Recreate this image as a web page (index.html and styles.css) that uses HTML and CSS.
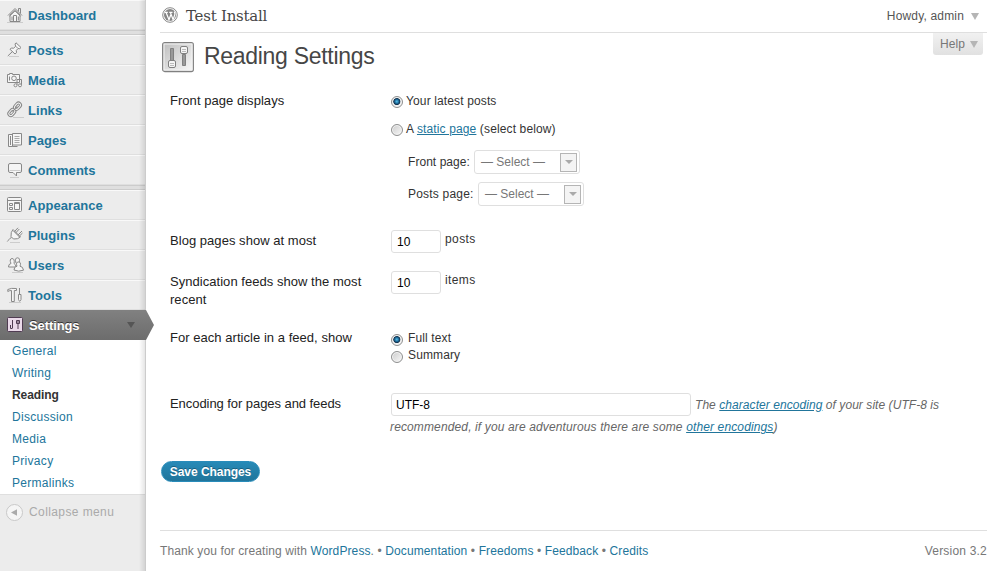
FILE: index.html
```html
<!DOCTYPE html>
<html lang="en">
<head>
<meta charset="utf-8">
<title>Reading Settings</title>
<link rel="stylesheet" href="styles.css">
</head>
<body>
<div class="layout">
  <nav class="sidebar">
    <a class="item"><svg class="icon" viewBox="0 0 16 16"><path class="fill" d="M3 8v6.500h10V8L8 3.500z"/><path d="M1 8.500L8 1.500l7 7M2.500 9.200L8 3.800l5.500 5.400M11.500 4.500v-3h2v5"/><path d="M6.500 14V8.500h3V14M5 9.500v4M11.300 9.500v4"/><path class="base" d="M0 15.500h16"/></svg><span>Dashboard</span></a>
    <div class="separator"></div>
    <a class="item"><svg class="icon" viewBox="0 0 16 16"><path class="fill" d="M9 .8l5 4.700-1.200 1.200-1.800-.2-1.700 2 .2 2.200-1.500 1.300L3 7.300l1.300-1.300 2.300.2L8.700 4.300 8 2z"/><path d="M5.500 9.500L.8 14M8.800 4.300l2 2"/><path class="base" d="M2 14.500h10"/></svg><span>Posts</span></a>
    <a class="item"><svg class="icon" viewBox="0 0 16 16"><path class="fill" d="M.5 2.500h2v-1h3v1h7v8H.5z"/><circle cx="7" cy="6.300" r="2.300"/><path d="M2.500 4.500v4M10 13V7.500h4.500V13"/><circle class="fill" cx="8.500" cy="13.300" r="1.500"/><circle class="fill" cx="13" cy="13.300" r="1.500"/></svg><span>Media</span></a>
    <a class="item"><svg class="icon links" viewBox="0 0 16 16"><g transform="rotate(-48 7.500 7.500)"><rect class="fill" x="-1" y="4.500" width="9" height="6" rx="3"/><rect x="1" y="6.500" width="5" height="2" rx="1"/><rect class="fill" x="7.500" y="4.500" width="9" height="6" rx="3"/><rect x="9.500" y="6.500" width="5" height="2" rx="1"/><path d="M4.500 7.500h7"/></g><path class="base" d="M6 15.500h11"/></svg><span>Links</span></a>
    <a class="item"><svg class="icon" viewBox="0 0 16 16"><path class="fill" d="M1.500 2.500h4v12h-4zM3.500 4v9M5.500 13v1.500h5"/><path class="fill" d="M5.500 1.500h9v11.500h-9z"/><path class="thin" d="M7.500 4.500h5M7.500 6.500h5M7.500 8.500h5M7.500 10.500h5"/></svg><span>Pages</span></a>
    <a class="item"><svg class="icon" viewBox="0 0 16 16"><path class="fill" d="M3 1.500h10q1.500 0 1.500 1.500v6q0 1.500-1.500 1.500H9.500v3.500l-3.500-3.500H3Q1.500 10.500 1.500 9V3Q1.500 1.500 3 1.500z"/><path class="base" d="M3 15.500h9M2.500 8.500h11"/></svg><span>Comments</span></a>
    <div class="separator"></div>
    <a class="item"><svg class="icon" viewBox="0 0 16 16"><rect class="fill" x=".5" y=".5" width="14" height="14" rx="1"/><path d="M1 3.500h13M2.500 6.500h3v2h-3zM2.500 10.500h3v2h-3zM7.500 5.500h5v7h-5zM7.500 6.500h5"/></svg><span>Appearance</span></a>
    <a class="item"><svg class="icon" viewBox="0 0 16 16"><path class="fill" d="M6 2.500l7.500 7.500-3 1.700-4 .3-2.500-2.500.3-4z"/><path d="M7.500 4.500L11 .8M8.800 5.800L12.300 2M11 8L15 4M12.300 9.200L15.500 6M6.500 4l6 6M4.500 10.500C2 11.500 2 13 .3 14.500"/><path class="base" d="M3 15.500h10"/></svg><span>Plugins</span></a>
    <a class="item icon-right"><svg class="icon" viewBox="0 0 16 16"><path class="fill" d="M.5 10q-.2-3 2.500-3.500Q1 2 4 1.500q3 .2 2 5 2 1 2 3.500z"/><path class="fill" d="M8 6Q6.500.8 9.500.8T11 6"/><path class="fill" d="M6 13q0-3.500 3-3.800Q7.500 5 10.500 5t1.500 4.200q3 .3 3.500 4-5 2-9.500-.2z"/><path class="base" d="M4 15.500h11"/></svg><span>Users</span></a>
    <a class="item"><svg class="icon" viewBox="0 0 16 16"><path class="fill" d="M.8 4.500V2.500Q4 .8 9.500 1.500v2H7.300v11H4.500v-11Q2 3.500.8 4.500z"/><path class="fill" d="M12.500 1v6M11.500 7.500h2.500v5q-1.200 3.500-2.500 0z"/><path class="base" d="M2 15.500h12"/></svg><span>Tools</span></a>
    <a class="item current"><svg class="icon" viewBox="0 0 16 16"><rect class="panel" x=".5" y=".5" width="15" height="14" rx="1"/><path class="knob" d="M5.500 3v8M11 4v8M3.500 8v3.500h2M9.500 3.500h3v3h-3z"/></svg><span>Settings</span><i class="arrow"></i></a>
    <div class="submenu">
      <a>General</a><a>Writing</a><a class="active">Reading</a><a>Discussion</a><a>Media</a><a>Privacy</a><a>Permalinks</a>
    </div>
    <div class="collapse"><svg class="collapse-icon" viewBox="0 0 17 17"><circle cx="8.500" cy="8.500" r="8"/><path d="M11 5.300v6.400L5 8.500z"/></svg><span>Collapse menu</span></div>
  </nav>
  <main class="content">
    <header class="topbar">
      <svg class="logo" viewBox="0 0 16 16"><circle class="ring" cx="8" cy="8" r="7.300"/><circle class="disc" cx="8" cy="8" r="6"/><path d="M2.800 5.300h3M4 5.300l3 7.500 1.800-5M7.300 5.300h3.200M8.300 5.300l2.800 7.500 1.700-5.200q.5-1.500-.7-3"/></svg>
      <h1>Test Install</h1>
      <div class="user">Howdy, admin<i class="arrow"></i></div>
    </header>
    <div class="heading">
      <svg class="page-icon" viewBox="0 0 32 31"><defs><linearGradient id="plate" x1="0" y1="0" x2="1" y2="1"><stop offset="0" stop-color="#bdbdbd"/><stop offset="1" stop-color="#fafafa"/></linearGradient></defs><rect x=".7" y=".7" width="30.600" height="28.800" rx="2" fill="url(#plate)" stroke="#808080" stroke-width="1.300"/><rect x="2" y="2" width="28" height="26" fill="none" stroke="#f3f3f3"/><path d="M8.500 6.500h3v12h-3zM20.500 12.500h3v11h-3z" fill="#999" stroke="#808080"/><rect x="6.500" y="18.500" width="7" height="7" rx="1.500" fill="#f5f5f5" stroke="#808080"/><rect x="18.500" y="4.500" width="7" height="7" rx="1.500" fill="#f5f5f5" stroke="#808080"/><path d="M8 21.500h4M8 23.500h4M20 7.500h4M20 9.500h4" stroke="#bbb"/></svg>
      <h2>Reading Settings</h2>
      <div class="help">Help<i class="arrow"></i></div>
    </div>
    <form class="settings">
      <div class="row front">
        <div class="label">Front page displays</div>
        <div class="field">
          <label class="choice"><i class="radio on"></i><span>Your latest posts</span></label>
          <label class="choice static"><i class="radio"></i><span>A <a class="link">static page</a> (select below)</span></label>
          <div class="pick"><span class="pick-front">Front page:</span><span class="select"><span>— Select —</span><i class="drop"></i></span></div>
          <div class="pick"><span class="pick-posts">Posts page:</span><span class="select"><span>— Select —</span><i class="drop"></i></span></div>
        </div>
      </div>
      <div class="row pages">
        <div class="label">Blog pages show at most</div>
        <div class="field number"><input class="input small" value="10"><span>posts</span></div>
      </div>
      <div class="row feeds">
        <div class="label">Syndication feeds show the most recent</div>
        <div class="field number"><input class="input small" value="10"><span>items</span></div>
      </div>
      <div class="row article">
        <div class="label">For each article in a feed, show</div>
        <div class="field tight">
          <label class="choice"><i class="radio on"></i><span>Full text</span></label>
          <label class="choice"><i class="radio"></i><span>Summary</span></label>
        </div>
      </div>
      <div class="row encoding">
        <div class="label">Encoding for pages and feeds</div>
        <div class="field">
          <div class="charset"><input class="input wide" value="UTF-8"><em class="first">The <a class="link">character encoding</a> of your site (UTF-8 is</em></div>
          <em class="second">recommended, if you are adventurous there are some <a class="link">other encodings</a>)</em>
        </div>
      </div>
      <button class="save" type="button">Save Changes</button>
    </form>
    <footer class="footer">
      <div class="credits">Thank you for creating with <a>WordPress</a>. • <a>Documentation</a> • <a>Freedoms</a> • <a>Feedback</a> • <a>Credits</a></div>
      <div class="version">Version 3.2</div>
    </footer>
  </main>
</div>
</body>
</html>
```
FILE: styles.css
```css
* { box-sizing: border-box; }
body { margin: 0; background: #fff; color: #333; font: 12px/18px "Liberation Sans", Arial, sans-serif; }
h1, h2 { margin: 0; font-weight: normal; }
svg { display: block; flex: none; }
a { color: #21759b; }
.layout { display: flex; width: 1002px; height: 571px; overflow: hidden; }

.sidebar { position: relative; flex: none; width: 146px; background: #ececec; border-right: 1px solid #ccc; }
.sidebar::after { content: ""; position: absolute; top: 0; right: 0; bottom: 0; width: 6px; background: linear-gradient(90deg, rgba(0,0,0,0), rgba(0,0,0,.1)); }
.item { display: flex; align-items: center; height: 30px; padding-left: 7px; border-top: 1px solid #f9f9f9; border-bottom: 1px solid #dfdfdf; font-weight: bold; font-size: 13px; letter-spacing: .04px; }
.item span { padding-top: 2px; }
.item .icon { width: 16px; height: 16px; margin-right: 5px; fill: none; stroke: #888; stroke-width: 1; overflow: visible; }
.icon .fill { fill: #f5f5f5; }
.icon .base { stroke: #ccc; stroke-width: 1; }
.icon .thin { stroke: #aaa; stroke-width: 1; }
.item.icon-right { padding-left: 8px; }
.item.icon-right .icon { margin-right: 4px; }
.separator { height: 5px; background: #dfdfdf; border-top: 1px solid #ccc; border-bottom: 1px solid #ccc; }
.item.current { position: relative; z-index: 2; background: linear-gradient(#808080, #6d6d6d); border-color: #808080 transparent #6d6d6d; color: #fff; text-shadow: 0 -1px 0 #333; letter-spacing: -.1px; }
.item.current .icon { margin-right: 6px; }
.item.current::after { content: ""; position: absolute; left: 145px; top: -1px; width: 9px; height: 30px; background: linear-gradient(#808080, #6d6d6d); clip-path: polygon(0 0, 1px 0, 100% 50%, 1px 100%, 0 100%); }
.icon .panel { fill: #ead9e9; stroke: #503c52; }
.icon .knob { fill: none; stroke: #503c52; }
.arrow { display: inline-block; border: 4px solid transparent; border-top: 7px solid #b5b5b5; border-bottom: 0; }
.current .arrow { margin-left: auto; margin-right: 10px; border-top: 6px solid #555; }
.submenu { display: flex; flex-direction: column; height: 154px; background: #fff; }
.submenu a { height: 22px; padding-left: 12px; line-height: 22px; letter-spacing: .3px; }
.submenu .active { color: #333; font-weight: bold; letter-spacing: -.1px; }
.collapse { display: flex; align-items: center; height: 35px; padding-left: 6px; gap: 6px; border-top: 1px solid #dfdfdf; color: #aaa; letter-spacing: .4px; }
.collapse-icon { width: 17px; height: 17px; }
.collapse-icon circle { fill: #f5f5f5; stroke: #c8c8c8; }
.collapse-icon path { fill: #aaa; }

.content { display: flex; flex-direction: column; flex: 1; padding: 0 15px 0 14px; }
.topbar { display: flex; align-items: center; height: 33px; padding-left: 2px; border-bottom: 1px solid #dfdfdf; }
.logo { width: 16px; height: 16px; margin-top: -2px; }
.logo .ring { fill: #fff; stroke: #888; }
.logo .disc { fill: #858585; }
.logo path { fill: none; stroke: #fff; stroke-width: 1.200; }
.topbar h1 { margin: 0 0 0 8px; font: 15px/20px "DejaVu Serif", serif; color: #464646; letter-spacing: -.25px; }
.user { display: flex; align-items: center; margin: 0 8px 0 auto; gap: 7px; color: #555; letter-spacing: .17px; }
.heading { display: flex; align-items: flex-start; height: 59px; padding-left: 2px; }
.page-icon { width: 32px; height: 31px; margin-top: 9px; }
.heading h2 { margin: 9px 0 0 10px; font-size: 23px; line-height: 28px; color: #464646; letter-spacing: -.3px; }
.help { display: flex; align-items: center; height: 22px; width: 50px; margin: 0 4px 0 auto; padding-left: 7px; gap: 5px; border-radius: 0 0 3px 3px; background: linear-gradient(#f1f1f1, #e1e1e1); color: #777; letter-spacing: .1px; }

.settings { display: flex; flex-direction: column; align-items: flex-start; height: 438px; }
.row { display: grid; grid-template-columns: 220px 1fr; width: 100%; padding-left: 10px; letter-spacing: .13px; }
.label { width: 205px; color: #222; font-size: 13px; letter-spacing: .04px; }
.front { height: 139px; }
.pages { height: 41px; }
.feeds { height: 57px; }
.article { height: 66px; }
.encoding { height: 66px; }
.encoding .label { letter-spacing: -.06px; }
.pages .label, .feeds .label { padding-top: 1px; }
.choice { display: flex; align-items: center; height: 18px; gap: 3px; padding-left: 1px; }
.static { margin-top: 10px; }
.radio { width: 12px; height: 12px; margin-top: 2px; border: 1px solid #8e8f8f; border-radius: 50%; background: linear-gradient(135deg, #ccc, #f8f8f8); box-shadow: inset 0 0 0 1px #f4f4f4; }
.radio.on { background: radial-gradient(circle at 48% 45%, #55c4ef 0, #1b6391 28%, #102f4a 42%, #eee 52%); }
.pick { display: flex; align-items: center; height: 24px; margin-top: 12px; padding-left: 18px; }
.pick + .pick { margin-top: 8px; }
.pick-front { width: 66px; letter-spacing: .05px; }
.pick-posts { width: 70px; letter-spacing: .2px; }
.select { display: flex; align-items: center; justify-content: space-between; width: 106px; height: 24px; padding: 0 2px 0 6px; border: 1px solid #dfdfdf; border-radius: 3px; color: #777; letter-spacing: 0; }
.drop { display: grid; place-items: center; width: 17px; height: 19px; border: 1px solid #b5b5b5; background: #f4f4f4; }
.drop::after { content: ""; border: 4px solid transparent; border-top-color: #aaa; border-bottom: 0; }
.number { display: flex; align-items: flex-start; padding-left: 1px; gap: 4px; margin-top: -1px; letter-spacing: .4px; }
.input { border: 1px solid #dfdfdf; border-radius: 3px; height: 23px; padding: 1px 4px; color: #000; background: #fff; font: 12px "Liberation Sans", Arial, sans-serif; }
.small { width: 50px; padding-left: 5px; }
.tight .choice { height: 17px; gap: 5px; }
.tight .radio { margin-top: 4px; }
.charset { display: flex; align-items: center; margin: -2px 0 0 1px; gap: 4px; letter-spacing: .06px; }
.wide { width: 300px; }
.encoding em { color: #666; white-space: nowrap; }
.second { display: block; margin-top: 1px; line-height: 20px; }
.link { text-decoration: underline; }
.save { width: 99px; height: 21px; margin-left: 1px; padding: 0; border: 1px solid #298cba; border-radius: 11px; background: linear-gradient(#278ab7, #21759b); color: #fff; font: bold 12px/18px "Liberation Sans", Arial, sans-serif; letter-spacing: -.05px; text-shadow: 0 -1px 0 rgba(0,0,0,.3); }
.footer { display: flex; align-items: center; justify-content: space-between; height: 41px; border-top: 1px solid #dfdfdf; color: #777; letter-spacing: .11px; }
.footer a { color: #21759b; }
.version { letter-spacing: .2px; }
```
